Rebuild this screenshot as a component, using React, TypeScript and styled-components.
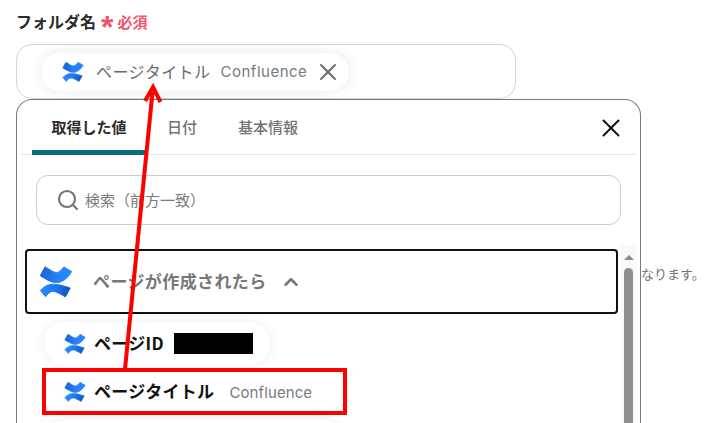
import React from "react";
import styled, { createGlobalStyle } from "styled-components";
import { Search, X, ChevronUp } from "lucide-react";

const GlobalStyle = createGlobalStyle`
  html, body {
    margin: 0;
    padding: 0;
    background: #fff;
  }
  * {
    box-sizing: border-box;
  }
`;

function ConfluenceLogo({ size, id }: { size: number; id: string }) {
  return (
    <LogoSvg width={size} height={size} viewBox="26 26 108 104">
      <defs>
        <linearGradient id={`${id}-a`} gradientUnits="userSpaceOnUse" x1="30" y1="40" x2="130" y2="60">
          <stop offset="0" stopColor="#1460d6" />
          <stop offset="0.6" stopColor="#2a83f6" />
          <stop offset="1" stopColor="#2684ff" />
        </linearGradient>
        <linearGradient id={`${id}-b`} gradientUnits="userSpaceOnUse" x1="30" y1="100" x2="125" y2="115">
          <stop offset="0" stopColor="#2b8cff" />
          <stop offset="0.5" stopColor="#1f78ee" />
          <stop offset="1" stopColor="#0c52bd" />
        </linearGradient>
      </defs>
      <path
        d="M45 30 C58 36 70 48 82 48 C90 48 98 38 105 30 L130 45 C120 62 104 80 82 80 C62 80 44 66 30 58 Z"
        fill={`url(#${id}-a)`}
        stroke={`url(#${id}-a)`}
        strokeWidth="3"
        strokeLinejoin="round"
      />
      <path
        d="M30 105 C40 94 52 85 72 85 C90 85 108 92 125 97 L110 125 C96 118 82 108 70 108 C60 108 54 116 47 125 Z"
        fill={`url(#${id}-b)`}
        stroke={`url(#${id}-b)`}
        strokeWidth="3"
        strokeLinejoin="round"
      />
    </LogoSvg>
  );
}

export default function App() {
  return (
    <Page>
      <GlobalStyle />
      <FieldLabel>
        フォルダ名
        <RequiredMark>*</RequiredMark>
        <RequiredText>必須</RequiredText>
      </FieldLabel>
      <FolderInput>
        <SelectedChip>
          <ConfluenceLogo size={22} id="selected" />
          <ChipTitle>ページタイトル</ChipTitle>
          <ChipSource>Confluence</ChipSource>
          <ChipRemove>
            <X size={28} strokeWidth={1.7} />
          </ChipRemove>
        </SelectedChip>
      </FolderInput>
      <PanelRow>
        <Panel>
          <TabBar>
            <Tab $active>取得した値</Tab>
            <Tab>日付</Tab>
            <Tab>基本情報</Tab>
            <CloseButton>
              <X size={30} strokeWidth={1.6} />
            </CloseButton>
          </TabBar>
          <SearchBox>
            <Search size={24} strokeWidth={2.2} color="#757575" />
            <SearchText>検索（前方一致）</SearchText>
          </SearchBox>
          <ListArea>
            <List>
              <Accordion>
                <ConfluenceLogo size={34} id="accordion" />
                <AccordionTitle>ページが作成されたら</AccordionTitle>
                <ChevronUp size={22} strokeWidth={2.8} color="#777" />
              </Accordion>
              <ValueChip>
                <ConfluenceLogo size={22} id="page-id" />
                <ValueName>ページID</ValueName>
                <Redacted />
              </ValueChip>
              <HighlightBox>
                <HighlightedChip>
                  <ConfluenceLogo size={22} id="page-title" />
                  <ValueName>ページタイトル</ValueName>
                  <ValueSource>Confluence</ValueSource>
                </HighlightedChip>
              </HighlightBox>
              <ValueChip $next />
            </List>
            <ScrollBar>
              <ScrollArrow />
              <ScrollThumb />
            </ScrollBar>
          </ListArea>
        </Panel>
        <SideNote>なります。</SideNote>
      </PanelRow>
      <ArrowOverlay width="704" height="423" viewBox="0 0 704 423">
        <line x1="125" y1="369" x2="152.5" y2="92" stroke="#ff0000" strokeWidth="4" />
        <path d="M145 101 L153 87 L160.5 102" stroke="#ff0000" strokeWidth="4" fill="none" />
      </ArrowOverlay>
    </Page>
  );
}

const Page = styled.div`
  position: relative;
  width: 704px;
  height: 423px;
  overflow: hidden;
  padding: 10px 0 0 16px;
  background: #fff;
  font-family: "Noto Sans CJK JP", "Noto Sans", sans-serif;
`;

const FieldLabel = styled.div`
  display: flex;
  align-items: center;
  height: 22px;
  font-size: 16px;
  font-weight: 700;
  color: #2b2b2b;
`;

const RequiredMark = styled.span`
  margin: 11px 4px 0 5px;
  font-family: "Liberation Sans", sans-serif;
  font-size: 32px;
  line-height: 22px;
  font-weight: 700;
  color: #f4516c;
`;

const RequiredText = styled.span`
  font-size: 15px;
  font-weight: 700;
  color: #f4516c;
`;

const FolderInput = styled.div`
  display: flex;
  align-items: center;
  width: 500px;
  height: 55px;
  margin-top: 12px;
  padding-left: 24px;
  border: 1px solid #d3d5dd;
  border-radius: 16px;
  background: #fff;
`;

const SelectedChip = styled.div`
  display: flex;
  align-items: center;
  width: 308px;
  height: 38px;
  padding-left: 21px;
  border-radius: 19px;
  background: #fff;
  box-shadow: 0 0 14px rgba(0, 0, 0, 0.09);
`;

const LogoSvg = styled.svg`
  flex-shrink: 0;
`;

const ChipTitle = styled.span`
  margin: 0 0 2px 12px;
  font-size: 16px;
  letter-spacing: 0.45px;
  color: #666b70;
`;

const ChipSource = styled.span`
  margin-left: 10px;
  font-family: Inter, "Noto Sans", sans-serif;
  font-size: 15px;
  letter-spacing: 0.5px;
  color: #767b80;
`;

const ChipRemove = styled.span`
  display: flex;
  margin-left: 7px;
  color: #6b6b6b;
`;

const PanelRow = styled.div`
  display: flex;
  align-items: flex-start;
`;

const Panel = styled.div`
  flex-shrink: 0;
  width: 625px;
  height: 340px;
  padding: 0 4px;
  border: 1px solid #7a7a7a;
  border-bottom: none;
  border-radius: 16px 16px 0 0;
  background: #fff;
`;

const TabBar = styled.div`
  display: flex;
  align-items: stretch;
  height: 55px;
  padding-left: 11px;
  border-bottom: 1px solid #e5e5e5;
`;

const Tab = styled.div<{ $active?: boolean }>`
  display: flex;
  align-items: center;
  justify-content: ${(p) => (p.$active ? "center" : "flex-start")};
  width: ${(p) => (p.$active ? "114px" : "auto")};
  margin-right: ${(p) => (p.$active ? "21px" : "41px")};
  margin-bottom: -1px;
  padding-top: 2px;
  font-size: 15px;
  font-weight: ${(p) => (p.$active ? 700 : 500)};
  color: ${(p) => (p.$active ? "#2b2b2b" : "#6f7478")};
  border-bottom: 5px solid ${(p) => (p.$active ? "#0b6a86" : "transparent")};
  border-radius: 5px 5px 0 0;
`;

const CloseButton = styled.div`
  display: flex;
  align-items: center;
  margin-left: auto;
  margin-right: 10px;
  margin-top: 2px;
  color: #111;
`;

const SearchBox = styled.div`
  display: flex;
  align-items: center;
  width: 585px;
  height: 50px;
  margin: 20px 0 0 15px;
  padding-left: 19px;
  border: 1px solid #cccccc;
  border-radius: 12px;
`;

const SearchText = styled.span`
  margin: 0 0 2px 5px;
  font-size: 15px;
  color: #7b7b7b;
`;

const ListArea = styled.div`
  display: flex;
  justify-content: space-between;
  margin-top: 20px;
`;

const List = styled.div`
  width: 593px;
  margin-top: 4px;
  margin-left: 4px;
`;

const Accordion = styled.div`
  display: flex;
  align-items: center;
  height: 65px;
  padding-left: 12px;
  border: 2px solid #111;
  border-radius: 4px;
`;

const AccordionTitle = styled.span`
  margin: 0 13px 2px 20px;
  font-size: 17px;
  letter-spacing: 0.4px;
  font-weight: 700;
  color: #777;
`;

const ValueChip = styled.div<{ $next?: boolean }>`
  display: flex;
  align-items: center;
  width: ${(p) => (p.$next ? "300px" : "226px")};
  height: 43px;
  margin: ${(p) => (p.$next ? "5px" : "8px")} 0 0 19px;
  padding-left: 20px;
  border-radius: 22px;
  background: #fff;
  box-shadow: 0 0 14px rgba(0, 0, 0, 0.07);
`;

const ValueName = styled.span`
  margin: 0 0 2px 8px;
  font-size: 17px;
  letter-spacing: 0.3px;
  font-weight: 700;
  color: #111;
`;

const Redacted = styled.div`
  width: 79px;
  height: 21px;
  margin-left: 10px;
  background: #000;
`;

const HighlightBox = styled.div`
  width: 305px;
  height: 47px;
  margin: 3px 0 0 17px;
  border: 4px solid #ff0000;
`;

const HighlightedChip = styled.div`
  display: flex;
  align-items: center;
  height: 100%;
  padding-left: 18px;
  border-radius: 20px;
  background: #fff;
`;

const ValueSource = styled.span`
  margin: 2px 0 0 15px;
  font-family: Inter, "Noto Sans", sans-serif;
  font-size: 15px;
  letter-spacing: 0.1px;
  color: #767b80;
`;

const ScrollBar = styled.div`
  display: flex;
  flex-direction: column;
  align-items: center;
  width: 15px;
  height: 180px;
  padding-top: 10px;
  background: #f9f9f9;
`;

const ScrollArrow = styled.div`
  width: 0;
  height: 0;
  border-left: 5px solid transparent;
  border-right: 5px solid transparent;
  border-bottom: 5px solid #8c8c8c;
`;

const ScrollThumb = styled.div`
  width: 9px;
  flex: 1;
  margin-top: 8px;
  border-radius: 5px 5px 0 0;
  background: #8f8f8f;
`;

const SideNote = styled.div`
  margin-top: 165px;
  font-size: 13px;
  color: #70767c;
  white-space: nowrap;
`;

const ArrowOverlay = styled.svg`
  position: absolute;
  top: 0;
  left: 0;
  pointer-events: none;
`;
